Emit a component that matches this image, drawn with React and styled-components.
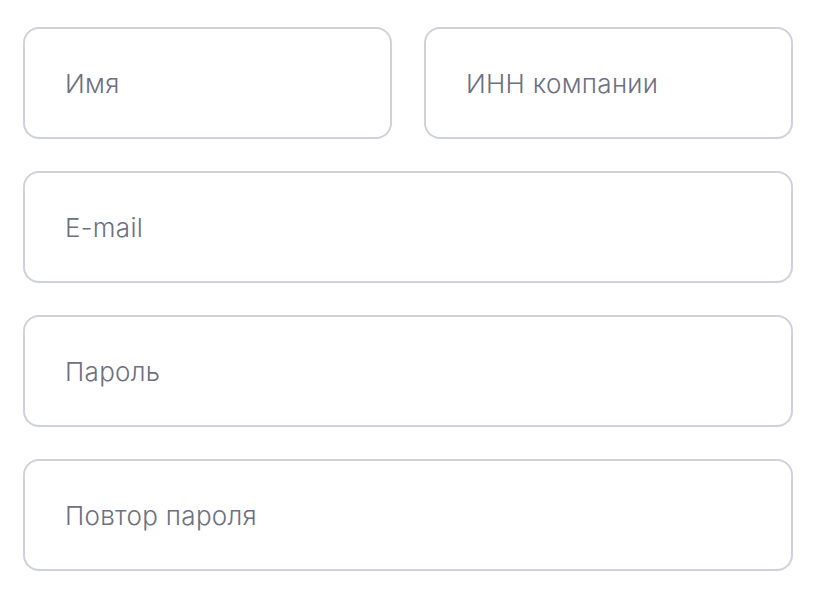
import React from "react";
import styled, { createGlobalStyle } from "styled-components";

const GlobalStyle = createGlobalStyle`
  body {
    margin: 0;
    background: #ffffff;
    font-family: Inter, "Noto Sans", sans-serif;
  }
`;

const Form = styled.form`
  width: 770px;
  padding: 27px 0 0 23px;
  display: flex;
  flex-direction: column;
  gap: 32px;
`;

const Row = styled.div`
  display: grid;
  grid-template-columns: ${(p) => (p.$split ? "1fr 1fr" : "1fr")};
  gap: 32px;
`;

const Field = styled.input`
  box-sizing: border-box;
  width: 100%;
  height: 112px;
  padding: 0 20px 0 40px;
  border: 2px solid #cfd1db;
  border-radius: 16px;
  background: #fff;
  font-family: Inter, "Noto Sans", sans-serif;
  font-size: 26px;
  font-weight: 350;
  letter-spacing: 0.3px;
  color: #2a2d38;
  outline: none;

  &::placeholder {
    color: #6c7080;
  }
`;

const App = () => {
  return (
    <>
      <GlobalStyle />
      <Form>
        <Row $split>
          <Field placeholder="Имя" />
          <Field placeholder="ИНН компании" />
        </Row>
        <Row>
          <Field type="email" placeholder="E-mail" />
        </Row>
        <Row>
          <Field type="password" placeholder="Пароль" />
        </Row>
        <Row>
          <Field type="password" placeholder="Повтор пароля" />
        </Row>
      </Form>
    </>
  );
};

export default App;
